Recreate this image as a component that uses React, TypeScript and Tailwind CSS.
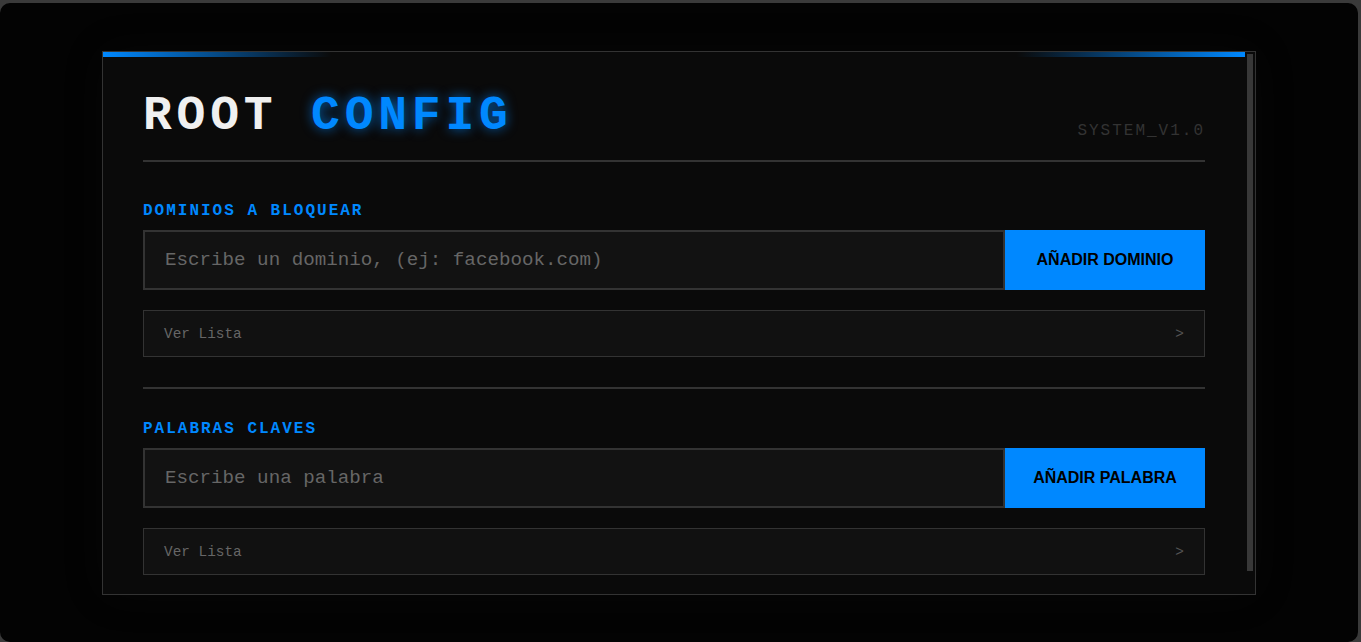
import React from "react";

const mono = "font-['Liberation_Mono','Courier_New',monospace]";

function Section({
  label,
  placeholder,
  button,
}: {
  label: string;
  placeholder: string;
  button: string;
}) {
  return (
    <div>
      <div className="mb-[10px] text-[16px] font-bold leading-[17px] tracking-[2px] text-[#0088ff]">{label}</div>
      <div className="flex h-[60px]">
        <input
          className="h-full min-w-0 flex-1 border-2 border-[#333] bg-[#121212] px-5 text-[19.2px] text-[#ddd] outline-none placeholder:text-[#666]"
          placeholder={placeholder}
        />
        <button className="h-full w-[200px] bg-[#0088ff] font-['Liberation_Sans',Arial,sans-serif] text-[16px] font-bold text-black">
          {button}
        </button>
      </div>
      <div className="mt-5 flex items-center justify-between border border-[#333] bg-[#111] px-5 pb-[13px] pt-[15px] text-[14.4px] leading-[17px] text-[#666]">
        <span>Ver Lista</span>
        <span className="text-[#555]">&gt;</span>
      </div>
    </div>
  );
}

export default function App() {
  return (
    <div className="h-[642px] w-full overflow-hidden bg-[#3a3a3a] pr-[3px] pt-[3px]">
      <div className={`flex h-[639px] justify-center rounded-[10px] bg-[#030303] pt-[48px] ${mono}`}>
        <div className="flex h-[544px] w-[1154px] border border-[#333] bg-[#0a0a0a] shadow-[0_0_40px_rgba(40,40,40,0.12)]">
          <div className="min-w-0 flex-1 overflow-hidden">
            <div className="relative px-10 pb-10 pt-10">
              <div className="absolute left-0 right-0 top-0 h-[5px] bg-[linear-gradient(90deg,#0088ff,transparent_20%,transparent_80%,#0088ff)]" />
              <div className="flex items-end justify-between border-b-2 border-[#333] pb-[20px]">
                <h1 className="text-[48px] font-bold leading-none tracking-[0.1em] text-[#f0f0f0]">
                  ROOT{" "}
                  <span className="text-[#0088ff] [text-shadow:0_0_12px_rgba(0,136,255,0.7)]">CONFIG</span>
                </h1>
                <span className="mb-[1px] text-[16px] leading-none tracking-[2px] text-[#333]">SYSTEM_V1.0</span>
              </div>
              <div className="mt-[41px]">
                <Section
                  label="DOMINIOS A BLOQUEAR"
                  placeholder="Escribe un dominio, (ej: facebook.com)"
                  button="AÑADIR DOMINIO"
                />
              </div>
              <div className="mb-[32px] mt-[30px] h-[2px] bg-[#333]" />
              <Section label="PALABRAS CLAVES" placeholder="Escribe una palabra" button="AÑADIR PALABRA" />
            </div>
          </div>
          <div className="w-[10px] shrink-0 bg-[#0a0a0a] pl-[2px] pt-[2px]">
            <div className="h-[517px] w-[6px] bg-[#383838]" />
          </div>
        </div>
      </div>
    </div>
  );
}
